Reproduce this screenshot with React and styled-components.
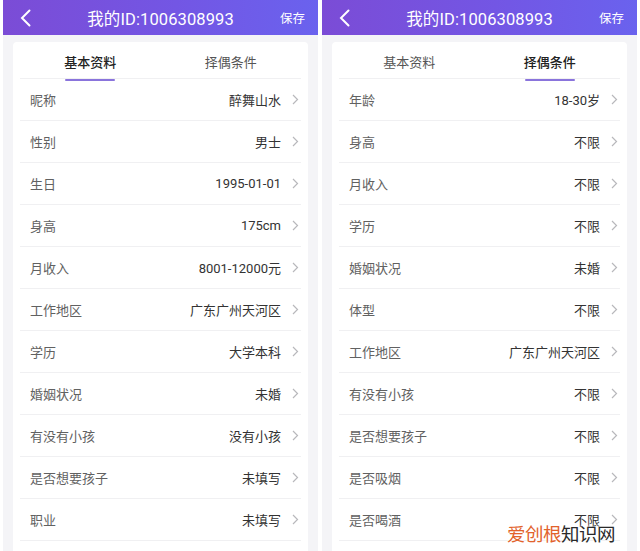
import React from "react";
import styled, { createGlobalStyle } from "styled-components";

const Global = createGlobalStyle`
  html, body { margin: 0; padding: 0; background: #fff; overflow: hidden; height: 551px; }
  body { font-family: Roboto, "Noto Sans CJK SC", sans-serif; }
  * { box-sizing: border-box; }
`;

const Page = styled.div`
  position: relative;
  display: flex;
  gap: 4px;
  padding: 0 3px;
  height: 551px;
  overflow: hidden;
`;

const Phone = styled.div`
  flex: 1;
  display: flex;
  flex-direction: column;
  background: #f4f4f7;
  min-width: 0;
`;

const Header = styled.div`
  height: 35px;
  flex: none;
  display: grid;
  grid-template-columns: 40px 1fr 40px;
  align-items: center;
  background: linear-gradient(90deg, #7b4cd6 0%, #7356e4 55%, #6a62ee 100%);
  color: #fff;
`;

const Back = styled.div`
  display: flex;
  justify-content: center;
  padding-left: 4px;
`;

const Title = styled.div`
  text-align: center;
  font-size: 16.5px;
  letter-spacing: 0.1px;
`;

const Save = styled.div`
  font-size: 12.5px;
  text-align: right;
  padding-right: 13px;
  white-space: nowrap;
`;

const Body = styled.div`
  flex: 1;
  padding: 7px 10px 0;
`;

const Card = styled.div`
  background: #fff;
  border-radius: 4px 4px 0 0;
  height: 100%;
`;

const Tabs = styled.div`
  display: grid;
  grid-template-columns: 1fr 1fr;
  height: 37px;
  margin: 0 7px;
  border-bottom: 1px solid #f0f0f2;
`;

const Tab = styled.div`
  display: flex;
  justify-content: center;
  align-items: center;
  position: relative;
`;

const TabLabel = styled.span`
  position: relative;
  font-size: 13px;
  color: ${(p) => (p.$active ? "#222" : "#555")};
  font-weight: ${(p) => (p.$active ? 500 : 400)};
  padding-top: 3px;
  &::after {
    content: "";
    display: ${(p) => (p.$active ? "block" : "none")};
    position: absolute;
    left: 1px;
    right: 1px;
    bottom: -10px;
    height: 2.5px;
    border-radius: 2px;
    background: #8a74dc;
  }
`;

const Row = styled.div`
  height: 42px;
  margin: 0 7px;
  display: flex;
  align-items: center;
  border-bottom: 1px solid #f0f0f2;
  padding: 0 2px 0 10px;
`;

const Label = styled.span`
  flex: 1;
  font-size: 13px;
  color: #616161;
`;

const Value = styled.span`
  font-size: 13px;
  color: #333;
  margin-right: 11px;
`;

const Watermark = styled.div`
  position: absolute;
  right: 25px;
  bottom: 5px;
  font-size: 18.5px;
  font-family: "Noto Sans CJK SC", sans-serif;
  color: #2a2a2a;
  letter-spacing: -0.5px;
  text-shadow: 0 0 3px #fff, 0 0 2px #fff;
`;

const Orange = styled.span`
  color: #e2622b;
`;

const Chevron = () => (
  <svg width="7" height="11" viewBox="0 0 7 11">
    <path d="M1 1l4.5 4.5L1 10" fill="none" stroke="#b8b8bc" strokeWidth="1.2" />
  </svg>
);

const BackIcon = () => (
  <svg width="11" height="18" viewBox="0 0 11 18">
    <path d="M9.5 1.5L2 9l7.5 7.5" fill="none" stroke="#fff" strokeWidth="2" strokeLinecap="round" />
  </svg>
);

const left = [
  ["昵称", "醉舞山水"],
  ["性别", "男士"],
  ["生日", "1995-01-01"],
  ["身高", "175cm"],
  ["月收入", "8001-12000元"],
  ["工作地区", "广东广州天河区"],
  ["学历", "大学本科"],
  ["婚姻状况", "未婚"],
  ["有没有小孩", "没有小孩"],
  ["是否想要孩子", "未填写"],
  ["职业", "未填写"],
];

const right = [
  ["年龄", "18-30岁"],
  ["身高", "不限"],
  ["月收入", "不限"],
  ["学历", "不限"],
  ["婚姻状况", "未婚"],
  ["体型", "不限"],
  ["工作地区", "广东广州天河区"],
  ["有没有小孩", "不限"],
  ["是否想要孩子", "不限"],
  ["是否吸烟", "不限"],
  ["是否喝酒", "不限"],
];

function PhoneView({ active, rows }) {
  return (
    <Phone>
      <Header>
        <Back><BackIcon /></Back>
        <Title>我的ID:1006308993</Title>
        <Save>保存</Save>
      </Header>
      <Body>
        <Card>
          <Tabs>
            <Tab><TabLabel $active={active === 0}>基本资料</TabLabel></Tab>
            <Tab><TabLabel $active={active === 1}>择偶条件</TabLabel></Tab>
          </Tabs>
          {rows.map(([k, v]) => (
            <Row key={k}>
              <Label>{k}</Label>
              <Value>{v}</Value>
              <Chevron />
            </Row>
          ))}
        </Card>
      </Body>
    </Phone>
  );
}

export default function App() {
  return (
    <>
      <Global />
      <Page>
        <PhoneView active={0} rows={left} />
        <PhoneView active={1} rows={right} />
        <Watermark>
          <Orange>爱创根</Orange>知识网
        </Watermark>
      </Page>
    </>
  );
}
